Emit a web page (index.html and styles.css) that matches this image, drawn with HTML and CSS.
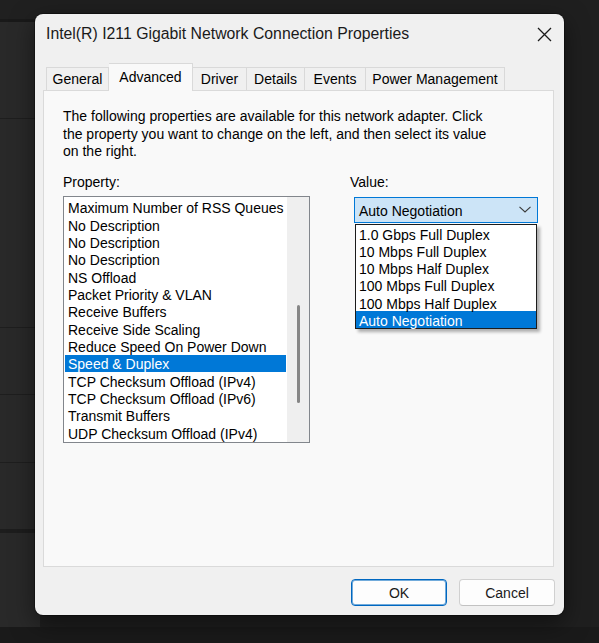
FILE: index.html
```html
<!DOCTYPE html>
<html lang="en">

<head>
    <meta charset="utf-8">
    <meta name="viewport" content="width=device-width, initial-scale=1.0">
    <link rel="stylesheet" href="styles.css">
</head>

<body>
    <!-- app window behind the dialog -->
    <div class="backdrop">
        <div class="rail">
            <div class="rail-top"></div>
            <div class="rail-row r1"></div>
            <div class="rail-row r2"></div>
            <div class="rail-row r3"></div>
            <div class="rail-row r4"></div>
            <div class="rail-row r5"></div>
            <div class="rail-row r6"></div>
        </div>
        <div class="backdrop-foot"></div>
    </div>

    <div class="dialog">
        <div class="titlebar">
            <span class="title">Intel(R) I211 Gigabit Network Connection Properties</span>
            <button type="button" class="close" aria-label="Close">
                <svg width="15" height="15" viewBox="0 0 15 15">
                    <path d="M1 1 L14 14 M14 1 L1 14" stroke="#1b1b1b" stroke-width="1.3" fill="none" />
                </svg>
            </button>
        </div>

        <div class="tabs">
            <div class="tab t-general">General</div>
            <div class="tab t-advanced active">Advanced</div>
            <div class="tab t-driver">Driver</div>
            <div class="tab t-details">Details</div>
            <div class="tab t-events">Events</div>
            <div class="tab t-power">Power Management</div>
        </div>

        <div class="panel">
            <p class="intro">
                The following properties are available for this network adapter. Click<br>
                the property you want to change on the left, and then select its value<br>
                on the right.
            </p>

            <div class="fields">
                <div class="prop-col">
                    <label class="field-label">Property:</label>
                    <div class="listbox">
                        <ul class="items">
                            <li>Maximum Number of RSS Queues</li>
                            <li>No Description</li>
                            <li>No Description</li>
                            <li>No Description</li>
                            <li>NS Offload</li>
                            <li>Packet Priority &amp; VLAN</li>
                            <li>Receive Buffers</li>
                            <li>Receive Side Scaling</li>
                            <li>Reduce Speed On Power Down</li>
                            <li class="selected">Speed &amp; Duplex</li>
                            <li>TCP Checksum Offload (IPv4)</li>
                            <li>TCP Checksum Offload (IPv6)</li>
                            <li>Transmit Buffers</li>
                            <li>UDP Checksum Offload (IPv4)</li>
                        </ul>
                        <div class="track">
                            <span class="thumb"></span>
                        </div>
                    </div>
                </div>

                <div class="value-col">
                    <label class="field-label">Value:</label>
                    <div class="combo">
                        <span>Auto Negotiation</span>
                        <svg width="12" height="7" viewBox="0 0 12 7">
                            <path d="M0.5 0.8 L6 6 L11.5 0.8" stroke="#3a3a3a" stroke-width="1.1" fill="none" />
                        </svg>
                    </div>
                    <ul class="dropdown">
                        <li>1.0 Gbps Full Duplex</li>
                        <li>10 Mbps Full Duplex</li>
                        <li>10 Mbps Half Duplex</li>
                        <li>100 Mbps Full Duplex</li>
                        <li>100 Mbps Half Duplex</li>
                        <li class="selected">Auto Negotiation</li>
                    </ul>
                </div>
            </div>
        </div>

        <div class="buttons">
            <button type="button" class="btn default">OK</button>
            <button type="button" class="btn">Cancel</button>
        </div>
    </div>
</body>

</html>
```

FILE: styles.css
```css
* {
    box-sizing: border-box;
}

body {
    margin: 0;
    width: 599px;
    height: 643px;
    overflow: hidden;
    background-color: #1f1f1f;
    font-family: "Liberation Sans", Arial, sans-serif;
    font-size: 14px;
    color: #000;
}

/* window behind */
.backdrop {
    height: 643px;
    display: flex;
    flex-direction: column;
}

.rail {
    width: 40px;
    height: 627px;
    display: flex;
    flex-direction: column;
}

.rail-top {
    height: 22px;
    background-color: #202020;
    border-bottom: 3px solid #191919;
}

.rail-row {
    background-color: #292929;
    border-bottom: 1px solid #1e1e1e;
}

.r1 { height: 97px; }
.r2 { height: 209px; }
.r3 { height: 67px; }
.r4 { height: 68px; }
.r5 { height: 70px; border-bottom: 4px solid #1d1d1d; }
.r6 { flex: 1; border-bottom: none; }

.backdrop-foot {
    flex: 1;
    background-color: #1a1a1a;
}

/* dialog */
.dialog {
    position: absolute;
    left: 35px;
    top: 14px;
    width: 529px;
    height: 601px;
    background-color: #f0f0f0;
    border-radius: 8px;
    box-shadow: 0 0 0 1px rgba(0, 0, 0, 0.35), 0 8px 24px rgba(0, 0, 0, 0.5);
    display: flex;
    flex-direction: column;
}

.titlebar {
    height: 49px;
    display: flex;
    justify-content: space-between;
    align-items: flex-start;
    padding: 11px 12px 0 11px;
}

.title {
    font-size: 15.8px;
    line-height: 18px;
    color: #1a1a1a;
}

.close {
    border: none;
    background: none;
    padding: 0;
    margin-top: 2px;
    width: 15px;
    height: 15px;
    display: flex;
}

.tabs {
    height: 27px;
    display: flex;
    align-items: flex-end;
    padding-left: 11px;
    position: relative;
    z-index: 1;
}

.tab {
    height: 23px;
    line-height: 23px;
    text-align: center;
    border: 1px solid #d9d9d9;
    border-bottom: none;
    background-color: #f0f0f0;
}

.tab + .tab {
    border-left: none;
}

.tab.active {
    height: 28px;
    line-height: 26px;
    margin-bottom: -1px;
    background-color: #f9f9f9;
    position: relative;
}

.t-general { width: 63px; }
.t-advanced { width: 84px; }
.t-driver { width: 54px; }
.t-details { width: 58px; }
.t-events { width: 61px; }
.t-power { width: 139px; }

.panel {
    height: 477px;
    margin: 0 10px 0 8px;
    background-color: #f9f9f9;
    border: 1px solid #dadada;
    padding: 17px 19px 0 19px;
}

.intro {
    margin: 0;
    line-height: 17.5px;
}

.fields {
    display: flex;
    margin-top: 12px;
}

.field-label {
    display: block;
    line-height: 17.5px;
    height: 23px;
    padding-top: 1px;
}

.prop-col {
    width: 247px;
}

.listbox {
    width: 247px;
    height: 247px;
    border: 1px solid #82868c;
    background-color: #fff;
    display: flex;
}

.items {
    flex: 1;
    list-style: none;
    margin: 0;
    padding: 2.3px 1px 0 1px;
    overflow: hidden;
}

.items li,
.dropdown li {
    height: 17.33px;
    line-height: 17.33px;
    padding: 1.5px 0 0 3px;
    white-space: nowrap;
}

li.selected {
    background-color: #0078d7;
    color: #fff;
}

.track {
    width: 22px;
    background-color: #efefef;
    display: flex;
    justify-content: center;
}

.thumb {
    width: 3px;
    height: 98px;
    margin-top: 108px;
    border-radius: 2px;
    background-color: #868686;
}

.value-col {
    margin-left: 40px;
}

.combo {
    width: 184px;
    height: 26px;
    margin: 1px 0 0 4px;
    border: 1px solid #0078d7;
    background-color: #cce4f7;
    display: flex;
    justify-content: space-between;
    align-items: center;
    padding: 3px 6px 0 4px;
}

.combo svg {
    margin-top: -3px;
}

.dropdown {
    list-style: none;
    width: 182px;
    margin: 1px 0 0 5px;
    padding: 0;
    border: 1px solid #1c1c1c;
    background-color: #fff;
    box-shadow: 3px 3px 3px rgba(0, 0, 0, 0.3);
}

.dropdown li {
    padding-top: 2px;
}

.buttons {
    display: flex;
    justify-content: flex-end;
    gap: 12px;
    padding: 12px 9px 0 0;
}

.btn {
    width: 96px;
    height: 27px;
    font-family: "Liberation Sans", Arial, sans-serif;
    font-size: 14px;
    color: #1a1a1a;
    background-color: #fdfdfd;
    border: 1px solid #d0d0d0;
    border-bottom-color: #c2c2c2;
    border-radius: 4px;
    padding: 0;
}

.btn.default {
    border: 1px solid #0067c0;
    box-shadow: inset 0 0 0 1px rgba(0, 103, 192, 0.55);
}
```
